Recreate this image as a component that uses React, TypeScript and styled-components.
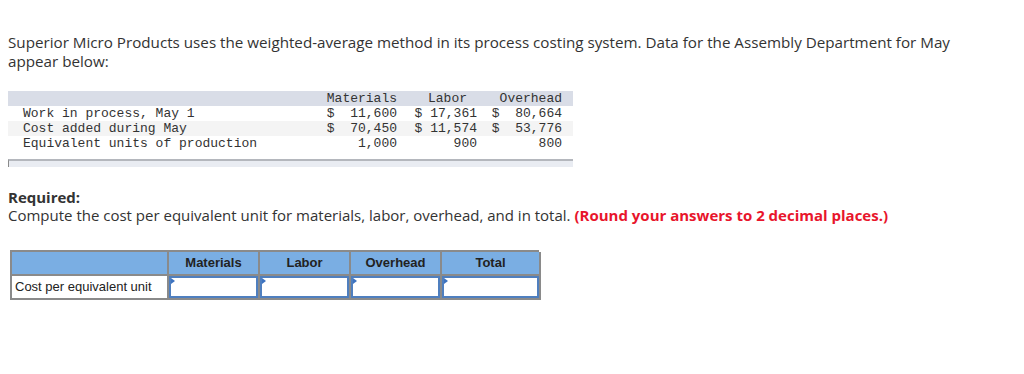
import { ReactElement } from 'react'
import styled, { createGlobalStyle } from 'styled-components'

const GlobalStyle = createGlobalStyle`
  html, body {
    margin: 0;
    padding: 0;
    background: #ffffff;
  }
  body {
    font-family: 'Open Sans', 'Liberation Sans', sans-serif;
    color: #333333;
  }
`

const Page = styled.div`
  padding: 33px 8px 0 8px;
  width: 1008px;
  height: 341px;
`

const Prose = styled.p`
  margin: 0;
  font-size: 15.2px;
  line-height: 19px;
  color: #333;
  width: 960px;
`

const DataTable = styled.div`
  margin-top: 20px;
  width: 565px;
  display: grid;
  grid-template-columns: 313px 77px 79px 86px 10px;
  font-family: 'Liberation Mono', 'Courier New', monospace;
  font-size: 13px;
  color: #333;
`

const DataCell = styled.div<{ bg?: string; align?: string; padRight?: number }>`
  height: 15px;
  line-height: 15px;
  white-space: pre;
  background: ${({ bg }) => bg || '#ffffff'};
  text-align: ${({ align }) => align || 'right'};
  padding-left: ${({ align }) => (align === 'left' ? '15px' : '0')};
  padding-right: ${({ padRight }) => (padRight ? `${padRight}px` : '0')};
`

const TableFoot = styled.div`
  grid-column: 1 / -1;
  margin-top: 8px;
  height: 6px;
  border-top: 2px solid #b4b7bd;
  border-left: 1px solid #8a8a8a;
  background: #e9ecf2;
`

const Required = styled.div`
  margin-top: 21px;
  font-size: 15px;
  line-height: 18px;
  color: #333;
`

const Bold = styled.b`
  font-weight: 700;
`

const Red = styled.b`
  color: #e8152c;
  font-weight: 700;
`

const AnswerTable = styled.div`
  margin-top: 26px;
  margin-left: 2px;
  display: grid;
  grid-template-columns: 157px 91px 91px 91px 99px;
  width: 529px;
  border-top: 2px solid #8a8a8a;
  border-left: 2px solid #8a8a8a;
  font-family: 'Liberation Sans', Arial, sans-serif;
  box-sizing: border-box;
`

const HeadCell = styled.div`
  height: 22px;
  line-height: 22px;
  background: #7aaee3;
  border-right: 2px solid #8a8a8a;
  border-bottom: 2px solid #8a8a8a;
  text-align: center;
  font-weight: 700;
  font-size: 13px;
  color: #222;
`

const LabelCell = styled.div`
  height: 22px;
  line-height: 22px;
  padding-left: 3px;
  border-right: 2px solid #8a8a8a;
  border-bottom: 2px solid #8a8a8a;
  font-size: 13px;
  color: #222;
  background: #fff;
`

const InputCell = styled.div`
  position: relative;
  height: 22px;
  border-right: 2px solid #8a8a8a;
  border-bottom: 2px solid #8a8a8a;
  background: #fff;
`

const Field = styled.input`
  display: block;
  box-sizing: border-box;
  width: 100%;
  height: 100%;
  margin: 0;
  border: 2px solid #4f7fbf;
  background: #fff;
  outline: none;
`

const Marker = styled.span`
  position: absolute;
  left: 2px;
  top: 2px;
  width: 0;
  height: 0;
  border-top: 3px solid transparent;
  border-bottom: 3px solid transparent;
  border-left: 4px solid #3d73c0;
`

const HEAD = '#d9dde7'
const rows = [
  { label: 'Work in process, May 1', values: ['$  11,600', '$ 17,361', '$  80,664'], bg: '#ffffff' },
  { label: 'Cost added during May', values: ['$  70,450', '$ 11,574', '$  53,776'], bg: '#f4f4f4' },
  { label: 'Equivalent units of production', values: ['1,000', '900', '800'], bg: '#ffffff' }
]

const columns = ['Materials', 'Labor', 'Overhead', 'Total']

export default function App(): ReactElement {
  return (
    <Page>
      <GlobalStyle />
      <Prose>
        Superior Micro Products uses the weighted-average method in its process costing system. Data
        for the Assembly Department for May appear below:
      </Prose>

      <DataTable>
        <DataCell bg={HEAD} align="left" />
        <DataCell bg={HEAD} padRight={1}>Materials</DataCell>
        <DataCell bg={HEAD} padRight={10}>Labor</DataCell>
        <DataCell bg={HEAD} padRight={1}>Overhead</DataCell>
        <DataCell bg={HEAD} />
        {rows.map((r) => (
          <>
            <DataCell key={r.label} bg={r.bg} align="left">{r.label}</DataCell>
            <DataCell bg={r.bg} padRight={1}>{r.values[0]}</DataCell>
            <DataCell bg={r.bg}>{r.values[1]}</DataCell>
            <DataCell bg={r.bg} padRight={1}>{r.values[2]}</DataCell>
            <DataCell bg={r.bg} />
          </>
        ))}
        <TableFoot />
      </DataTable>

      <Required>
        <Bold>Required:</Bold>
        <br />
        Compute the cost per equivalent unit for materials, labor, overhead, and in total.{' '}
        <Red>(Round your answers to 2 decimal places.)</Red>
      </Required>

      <AnswerTable>
        <HeadCell />
        {columns.map((c) => (
          <HeadCell key={c}>{c}</HeadCell>
        ))}
        <LabelCell>Cost per equivalent unit</LabelCell>
        {columns.map((c) => (
          <InputCell key={c}>
            <Field type="text" aria-label={c} />
            <Marker />
          </InputCell>
        ))}
      </AnswerTable>
    </Page>
  )
}
